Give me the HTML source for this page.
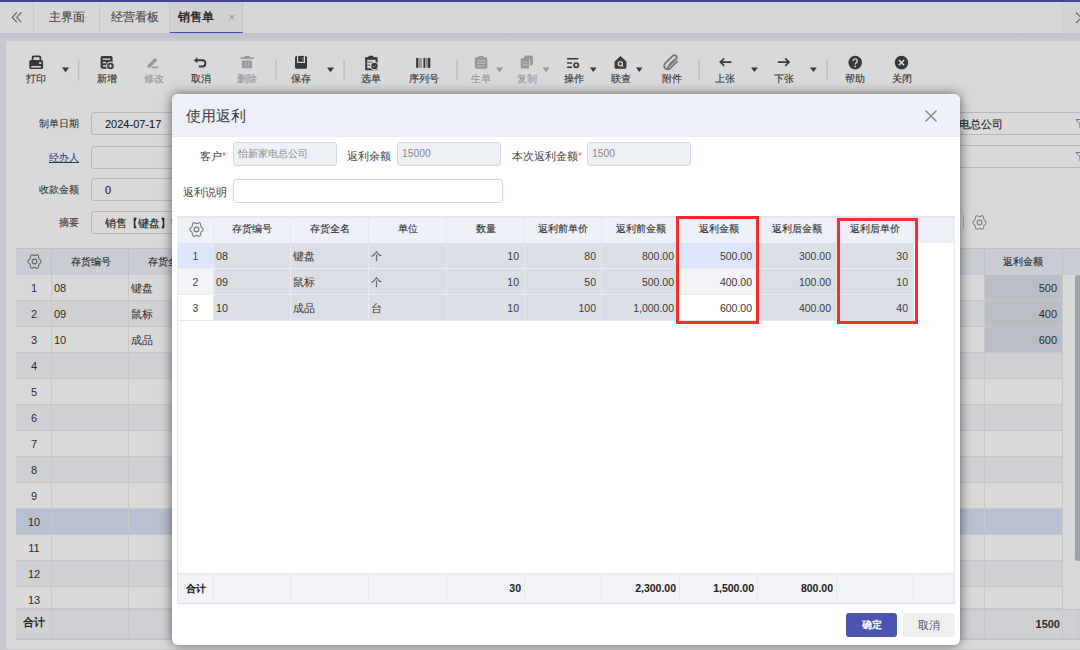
<!DOCTYPE html>
<html><head><meta charset="utf-8">
<style>
*{box-sizing:border-box;margin:0;padding:0}
html,body{width:1080px;height:650px;overflow:hidden}
body{position:relative;font-family:"Liberation Sans",sans-serif;font-size:11px;color:#333;background:#eaecf4}
.a{position:absolute}
.t{position:absolute;white-space:nowrap}
#topline{left:0;top:0;width:1080px;height:2px;background:#4a55b0}
#tabbar{left:0;top:2px;width:1080px;height:31px;background:#fdfdfd}
.tab{position:absolute;top:0;height:31px;border-right:1px solid #ececec;font-size:12.3px;color:#555;-webkit-text-stroke:0.15px #555;line-height:31px;text-align:center}
#panel{left:6px;top:41px;width:1074px;height:608px;background:#fff}
.lbl{position:absolute;top:73px;white-space:nowrap;line-height:12px;font-size:10px;-webkit-text-stroke:0.15px #444;color:#444;transform:translateX(-50%)}
.lbl.dis{-webkit-text-stroke:0.15px #b4b4b4}
.dis{color:#b4b4b4}
.flbl{position:absolute;white-space:nowrap;color:#444;-webkit-text-stroke:0.1px #444;font-size:10px;line-height:12px;text-align:right}
.inp{position:absolute;height:23px;border:1px solid #d3d9e8;border-radius:3px;background:#fff;font-size:11px;line-height:21px;padding-top:1px;padding-left:13px;color:#222;-webkit-text-stroke:0.1px #222;white-space:nowrap;overflow:hidden}
.bc{position:absolute;border-right:1px solid #e4e4e4;border-bottom:1px solid #e4e4e4;white-space:nowrap;overflow:hidden;font-size:11px;line-height:25px;color:#333}
#overlay{left:0;top:0;width:1080px;height:650px;background:rgba(0,0,0,0.15)}
#modal{left:172px;top:94px;width:788px;height:551px;background:#fff;border-radius:6px;overflow:hidden;box-shadow:0 0 12px rgba(0,0,0,0.58)}
#mhead{left:0;top:0;width:788px;height:43px;background:#edf0f7;border-bottom:1px solid #e9ebf0}
.mlbl{position:absolute;white-space:nowrap;color:#444;font-size:10.6px;line-height:12px}
.mi{position:absolute;height:24px;border:1px solid #cdd6ea;border-radius:3px;background:#fff;font-size:10.3px;line-height:21px;padding-left:4px;color:#8a8a8a;white-space:nowrap}
.mi.ro{background:#edf0f5}
.mc{position:absolute;border-right:1px solid #e6e8ee;border-bottom:1px solid #e6e8ee;white-space:nowrap;overflow:hidden;font-size:11px;line-height:25px;color:#333}
.mh{position:absolute;white-space:nowrap;overflow:hidden;font-size:10px;-webkit-text-stroke:0.12px #333;line-height:26px;color:#333;text-align:center}
.r{text-align:right;padding-right:4px}
.l{padding-left:3px}
.rbox{position:absolute;border:3px solid #fe2b2b}
</style></head>
<body>
<div id="page">
<div class="a" id="topline"></div>
<div class="a" id="tabbar">
 <div class="tab" style="left:0;width:34px"></div>
 <svg class="a" style="left:0;top:-2px" width="34" height="33"><path d="M16.9,12.3L12.3,17.4L16.9,22.4M21.4,12.3L16.8,17.4L21.4,22.4" fill="none" stroke="#838383" stroke-width="1.35"/></svg>
 <div class="tab" style="left:34px;width:66px">主界面</div>
 <div class="tab" style="left:100px;width:70px">经营看板</div>
 <div class="tab" style="left:170px;width:73px;background:#f6f6f6;color:#222;-webkit-text-stroke:0.35px #222;text-align:left;padding-left:8px">销售单<span style="position:absolute;left:58.5px;top:0;font-size:11px;color:#aaa;-webkit-text-stroke:0">×</span></div>
 <div class="a" style="left:170px;top:29.5px;width:73px;height:1.5px;background:#5262bf"></div>
 <div class="tab" style="left:1061px;width:19px;background:#f7f7f7;border:none"></div>
 <svg class="a" style="left:1075px;top:10px" width="12" height="12"><path d="M1,0.5L11.5,11M11.5,0.5L1,11" stroke="#7a7a7a" stroke-width="1.2"/></svg>
</div>
<div class="a" style="left:0;top:33px;width:1080px;height:8px;background:linear-gradient(#e0e3f1,#eaecf5)"></div>
<div class="a" id="panel"></div>
<svg class="a" style="left:0;top:0" width="1080" height="100" viewBox="0 0 1080 100">
   <g fill="#444">
    <!-- printer -->
    <path d="M32.6,60.2V57.4a1,1 0 0 1 1,-1H39.4a1,1 0 0 1 1,1V60.2" fill="none" stroke="#444" stroke-width="1.7"/>
    <rect x="29.3" y="60" width="13.8" height="9" rx="1.6"/>
    <rect x="31.2" y="66.1" width="9.8" height="1.5" fill="#fff"/>
    <rect x="39" y="62.3" width="2.4" height="1.6" fill="#fff"/>
    <path d="M62,67.5h7l-3.5,4.7z"/>
    <!-- xinzeng doc -->
    <rect x="100.6" y="56" width="12" height="12.8" rx="1.8"/>
    <rect x="102.8" y="58.5" width="7.4" height="1.4" fill="#fff"/>
    <rect x="102.8" y="61.9" width="3.4" height="1.4" fill="#fff"/>
    <rect x="102.8" y="65.3" width="3.4" height="1.4" fill="#fff"/>
    <circle cx="110.5" cy="66" r="4.4" fill="#fff"/>
    <circle cx="110.5" cy="66" r="3.3"/>
    <path d="M110.5,64.2v3.6M108.7,66h3.6" stroke="#fff" stroke-width="1"/>
    <!-- undo -->
    <path d="M193.8,60.3l3.6,-3v6z"/>
    <path d="M196.5,60.3H202.3a3.1,3.1 0 0 1 0,6.2H198.8" fill="none" stroke="#444" stroke-width="1.9"/>
    <!-- floppy -->
    <rect x="295" y="55.9" width="12" height="12.9" rx="1.6"/>
    <rect x="297" y="55.9" width="8" height="7.1" fill="#fff"/>
    <rect x="298.2" y="55.9" width="5.6" height="5.9"/>
    <rect x="302.3" y="57.3" width="1.3" height="3.4" fill="#999"/>
    <path d="M327,67.5h7l-3.5,4.7z"/>
    <!-- clipboard check -->
    <path d="M366.2,58.3h10.4v11h-10.4z" fill="none" stroke="#444" stroke-width="2"/>
    <rect x="365.2" y="57.4" width="11.4" height="2.4" rx="1"/>
    <rect x="368.5" y="55.8" width="4.8" height="2.2" rx="0.8"/>
    <rect x="367.6" y="61.5" width="5" height="1.4" fill="#888"/>
    <rect x="367.6" y="64.6" width="3" height="1.4" fill="#888"/>
    <circle cx="374.5" cy="66" r="4.2" fill="#fff"/>
    <circle cx="374.5" cy="66" r="3.2"/>
    <path d="M372.9,66l1.1,1.1l2,-2" fill="none" stroke="#aaa" stroke-width="0.9"/>
    <!-- barcode -->
    <rect x="416.1" y="57.9" width="1.9" height="9.9"/>
    <rect x="418" y="57.9" width="3.9" height="9.9" fill="#b0b0b0"/>
    <rect x="423.4" y="57.9" width="1.8" height="9.9"/>
    <rect x="425.2" y="57.9" width="2.8" height="9.9" fill="#b0b0b0"/>
    <rect x="428" y="57.9" width="2.3" height="9.9"/>
    <!-- caozuo lines -->
    <rect x="566.9" y="57.9" width="11.6" height="1.5" rx="0.7"/>
    <rect x="566.9" y="62.3" width="5.2" height="1.5" rx="0.7"/>
    <rect x="566.9" y="66.6" width="5.2" height="1.5" rx="0.7"/>
    <circle cx="576.2" cy="65.2" r="2.2" fill="none" stroke="#444" stroke-width="1.7"/>
    <path d="M590,67.5h6.5l-3.25,4.5z"/>
    <!-- lianche house -->
    <path d="M614.6,61.4L620.5,56.1L626.4,61.4V67.6a1.1,1.1 0 0 1 -1.1,1.1H615.7a1.1,1.1 0 0 1 -1.1,-1.1z"/>
    <circle cx="620.3" cy="63.8" r="2.1" fill="none" stroke="#fff" stroke-width="1.3"/>
    <path d="M621.5,65l1.6,1.6" stroke="#fff" stroke-width="1.3"/>
    <path d="M636,67.5h6.5l-3.25,4.5z"/>
    <!-- arrows -->
    <path d="M719.8,62.1H731.4M724.2,58.4L720.4,62.1L724.2,65.8" fill="none" stroke="#444" stroke-width="1.7"/>
    <path d="M751,67.5h6.8l-3.4,4.6z"/>
    <path d="M778,62.1H789.6M785.2,58.4L789,62.1L785.2,65.8" fill="none" stroke="#444" stroke-width="1.7"/>
    <path d="M810,67.5h6.8l-3.4,4.6z"/>
    <!-- help -->
    <circle cx="855.2" cy="62.6" r="6.8"/>
    <path d="M853.1,61a2.1,2.1 0 1 1 3,1.9c-0.7,0.4 -0.9,0.8 -0.9,1.6" fill="none" stroke="#fff" stroke-width="1.4"/>
    <circle cx="855.2" cy="66.4" r="0.85" fill="#fff"/>
    <!-- close -->
    <circle cx="901.5" cy="62.6" r="6.8"/>
    <path d="M898.9,60l5.2,5.2M904.1,60l-5.2,5.2" stroke="#fff" stroke-width="1.6"/>
   </g>
   <g fill="#b3b3b3">
    <!-- pencil -->
    <path d="M147.2,68.1L147.9,64.9L155,57.8L157.4,60.2L150.3,67.3Z"/>
    <rect x="151.4" y="66.6" width="7" height="1.6" rx="0.6"/>
    <!-- trash -->
    <rect x="240.6" y="57.2" width="13.3" height="1.7"/>
    <rect x="244.8" y="56" width="5" height="1.6"/>
    <rect x="242" y="60.4" width="10" height="7.9" rx="0.8"/>
    <rect x="245.2" y="61.8" width="1" height="5" fill="#ddd"/>
    <rect x="247.8" y="61.8" width="1" height="5" fill="#ddd"/>
    <!-- shengdan clipboard -->
    <rect x="474.9" y="57.2" width="12.4" height="11.5" rx="1.5"/>
    <rect x="478.5" y="56" width="5.2" height="2.2" rx="0.8"/>
    <rect x="477" y="60.2" width="8.2" height="1.2" fill="#ddd"/>
    <rect x="477" y="62.8" width="8.2" height="1.2" fill="#ddd"/>
    <rect x="477" y="65.4" width="8.2" height="1.2" fill="#ddd"/>
    <path d="M496,67.5h7l-3.5,4.7z"/>
    <!-- copy -->
    <rect x="524.2" y="55.6" width="8.6" height="9.8" rx="1.5"/>
    <rect x="521.8" y="58.5" width="8.4" height="10.6" rx="1.5" fill="#fff"/>
    <rect x="520.7" y="58" width="8.6" height="10.6" rx="1.5"/>
    <rect x="522.6" y="61.6" width="5" height="1.2" fill="#ddd"/>
    <rect x="522.6" y="64.2" width="5" height="1.2" fill="#ddd"/>
    <path d="M542.6,67.5h7l-3.5,4.7z"/>
   </g>
   <!-- paperclip -->
   <path d="M667.6,67.6L676,59.2a2.3,2.3 0 0 0 -3.3,-3.3L665.2,63.4a3.5,3.5 0 0 0 5,5L677.2,61.4" fill="none" stroke="#8a8a8a" stroke-width="1.7" stroke-linecap="round"/>
   <path d="M669.2,64.8L674.2,59.8" fill="none" stroke="#8a8a8a" stroke-width="1.4" stroke-linecap="round"/>
   <!-- separators -->
   <g fill="#d3d3d3">
    <rect x="78.3" y="59.3" width="1" height="21.5"/>
    <rect x="275.6" y="59.3" width="1" height="21.5"/>
    <rect x="343.6" y="59.3" width="1" height="21.5"/>
    <rect x="456.6" y="59.3" width="1" height="21.5"/>
    <rect x="698.6" y="59.3" width="1" height="21.5"/>
    <rect x="826.6" y="59.3" width="1" height="21.5"/>
   </g>
  </svg>
  <div class="lbl" style="left:36px">打印</div>
  <div class="lbl" style="left:107.3px">新增</div>
  <div class="lbl dis" style="left:153.5px">修改</div>
  <div class="lbl" style="left:200.7px">取消</div>
  <div class="lbl dis" style="left:247.3px">删除</div>
  <div class="lbl" style="left:300.5px">保存</div>
  <div class="lbl" style="left:371.4px">选单</div>
  <div class="lbl" style="left:423.5px">序列号</div>
  <div class="lbl dis" style="left:480.5px">生单</div>
  <div class="lbl dis" style="left:526.9px">复制</div>
  <div class="lbl" style="left:574.3px">操作</div>
  <div class="lbl" style="left:620.5px">联查</div>
  <div class="lbl" style="left:671.8px">附件</div>
  <div class="lbl" style="left:725.4px">上张</div>
  <div class="lbl" style="left:784.3px">下张</div>
  <div class="lbl" style="left:855px">帮助</div>
  <div class="lbl" style="left:901.5px">关闭</div>
<div class="flbl" style="left:0;width:79px;top:118px">制单日期</div>
<div class="inp" style="left:91px;top:112px;width:200px">2024-07-17</div>
<div class="flbl" style="left:0;width:79px;top:151.5px;color:#3d4fb8;text-decoration:underline">经办人</div>
<div class="inp" style="left:91px;top:145.5px;width:200px"></div>
<div class="flbl" style="left:0;width:79px;top:184px">收款金额</div>
<div class="inp" style="left:91px;top:178px;width:200px">0</div>
<div class="flbl" style="left:0;width:79px;top:217px">摘要</div>
<div class="inp" style="left:91px;top:211px;width:200px">销售【键盘】等</div>
<div class="inp" style="left:880px;top:112px;width:220px;padding-left:45px;color:#222">怡新家电总公司</div>
<div class="inp" style="left:880px;top:145px;width:220px"></div>
<svg class="a" style="left:1075px;top:118px" width="10" height="12"><path d="M1,1.5H11L7,6V11L5,10V6z" fill="none" stroke="#7a8aa8" stroke-width="1"/></svg>
<svg class="a" style="left:1075px;top:151px" width="10" height="12"><path d="M1,1.5H11L7,6V11L5,10V6z" fill="none" stroke="#7a8aa8" stroke-width="1"/></svg>
<div class="a" style="left:963px;top:215px;width:1px;height:14px;background:#ccc"></div>
<svg class="a" style="left:971.5px;top:214.5px" width="15" height="15" viewBox="0 0 16 16" style="overflow:visible"><path d="M14.95,8.00 L14.88,8.52 L14.67,9.01 L14.36,9.46 L13.99,9.85 L13.60,10.19 L13.24,10.50 L12.94,10.80 L12.72,11.13 L12.58,11.52 L12.50,11.97 L12.45,12.48 L12.38,13.04 L12.28,13.61 L12.10,14.14 L11.83,14.59 L11.48,14.92 L11.05,15.11 L10.58,15.15 L10.09,15.06 L9.60,14.89 L9.15,14.67 L8.74,14.46 L8.36,14.32 L8.00,14.27 L7.64,14.32 L7.26,14.46 L6.85,14.67 L6.40,14.89 L5.91,15.06 L5.42,15.15 L4.95,15.11 L4.53,14.92 L4.17,14.59 L3.90,14.14 L3.72,13.61 L3.62,13.04 L3.55,12.48 L3.50,11.97 L3.42,11.52 L3.28,11.13 L3.06,10.80 L2.76,10.50 L2.40,10.19 L2.01,9.85 L1.64,9.46 L1.33,9.01 L1.12,8.52 L1.05,8.00 L1.12,7.48 L1.33,6.99 L1.64,6.54 L2.01,6.15 L2.40,5.81 L2.76,5.50 L3.06,5.20 L3.28,4.87 L3.42,4.48 L3.50,4.03 L3.55,3.52 L3.62,2.96 L3.72,2.39 L3.90,1.86 L4.17,1.41 L4.52,1.08 L4.95,0.89 L5.42,0.85 L5.91,0.94 L6.40,1.11 L6.85,1.33 L7.26,1.54 L7.64,1.68 L8.00,1.73 L8.36,1.68 L8.74,1.54 L9.15,1.33 L9.60,1.11 L10.09,0.94 L10.58,0.85 L11.05,0.89 L11.48,1.08 L11.83,1.41 L12.10,1.86 L12.28,2.39 L12.38,2.96 L12.45,3.52 L12.50,4.03 L12.58,4.48 L12.72,4.87 L12.94,5.20 L13.24,5.50 L13.60,5.81 L13.99,6.15 L14.36,6.54 L14.67,6.99 L14.88,7.48Z" fill="none" stroke="#999" stroke-width="1.15" stroke-linejoin="round"/><circle cx="8" cy="8" r="2.5" fill="none" stroke="#999" stroke-width="1.15"/></svg>
<div class="a" style="left:16px;top:248px;width:1064px;height:27px;background:#edf0f7;border-top:1px solid #dfe3ec"></div>
<div class="a" style="left:51px;top:248px;width:1px;height:27px;background:#dde2ec"></div>
<div class="a" style="left:128px;top:248px;width:1px;height:27px;background:#dde2ec"></div>
<div class="a" style="left:984px;top:248px;width:1px;height:27px;background:#dde2ec"></div>
<div class="a" style="left:1062px;top:248px;width:1px;height:27px;background:#dde2ec"></div>
<svg class="a" style="left:27px;top:253.5px" width="15" height="15" viewBox="0 0 16 16" style="overflow:visible"><path d="M14.95,8.00 L14.88,8.52 L14.67,9.01 L14.36,9.46 L13.99,9.85 L13.60,10.19 L13.24,10.50 L12.94,10.80 L12.72,11.13 L12.58,11.52 L12.50,11.97 L12.45,12.48 L12.38,13.04 L12.28,13.61 L12.10,14.14 L11.83,14.59 L11.48,14.92 L11.05,15.11 L10.58,15.15 L10.09,15.06 L9.60,14.89 L9.15,14.67 L8.74,14.46 L8.36,14.32 L8.00,14.27 L7.64,14.32 L7.26,14.46 L6.85,14.67 L6.40,14.89 L5.91,15.06 L5.42,15.15 L4.95,15.11 L4.53,14.92 L4.17,14.59 L3.90,14.14 L3.72,13.61 L3.62,13.04 L3.55,12.48 L3.50,11.97 L3.42,11.52 L3.28,11.13 L3.06,10.80 L2.76,10.50 L2.40,10.19 L2.01,9.85 L1.64,9.46 L1.33,9.01 L1.12,8.52 L1.05,8.00 L1.12,7.48 L1.33,6.99 L1.64,6.54 L2.01,6.15 L2.40,5.81 L2.76,5.50 L3.06,5.20 L3.28,4.87 L3.42,4.48 L3.50,4.03 L3.55,3.52 L3.62,2.96 L3.72,2.39 L3.90,1.86 L4.17,1.41 L4.52,1.08 L4.95,0.89 L5.42,0.85 L5.91,0.94 L6.40,1.11 L6.85,1.33 L7.26,1.54 L7.64,1.68 L8.00,1.73 L8.36,1.68 L8.74,1.54 L9.15,1.33 L9.60,1.11 L10.09,0.94 L10.58,0.85 L11.05,0.89 L11.48,1.08 L11.83,1.41 L12.10,1.86 L12.28,2.39 L12.38,2.96 L12.45,3.52 L12.50,4.03 L12.58,4.48 L12.72,4.87 L12.94,5.20 L13.24,5.50 L13.60,5.81 L13.99,6.15 L14.36,6.54 L14.67,6.99 L14.88,7.48Z" fill="none" stroke="#777" stroke-width="1.15" stroke-linejoin="round"/><circle cx="8" cy="8" r="2.5" fill="none" stroke="#777" stroke-width="1.15"/></svg>
<div class="t" style="left:52px;top:256px;width:77px;text-align:center;font-size:10px;-webkit-text-stroke:0.12px #333;line-height:12px;color:#333">存货编号</div>
<div class="t" style="left:129px;top:256px;width:78px;text-align:center;font-size:10px;-webkit-text-stroke:0.12px #333;line-height:12px;color:#333">存货全名</div>
<div class="t" style="left:906px;top:256px;width:78px;text-align:center;font-size:10px;-webkit-text-stroke:0.12px #333;line-height:12px;color:#333">折扣额</div>
<div class="t" style="left:984px;top:256px;width:78px;text-align:center;font-size:10px;-webkit-text-stroke:0.12px #333;line-height:12px;color:#333">返利金额</div>
<div class="a" style="left:16px;top:274.5px;width:1047px;height:26px;background:#fff;border-bottom:1px solid #eaeaea"></div>
<div class="a" style="left:51px;top:274.5px;width:1px;height:26px;background:#eaeaea"></div>
<div class="a" style="left:128px;top:274.5px;width:1px;height:26px;background:#eaeaea"></div>
<div class="a" style="left:984px;top:274.5px;width:1px;height:26px;background:#eaeaea"></div>
<div class="a" style="left:1062px;top:274.5px;width:1px;height:26px;background:#eaeaea"></div>
<div class="t" style="left:16px;top:274.5px;width:36px;text-align:center;line-height:26px;font-size:11px;color:#333">1</div>
<div class="a" style="left:985px;top:274.5px;width:77px;height:25px;background:#dcdee7"></div>
<div class="t" style="left:54px;top:274.5px;line-height:26px">08</div>
<div class="t" style="left:131px;top:274.5px;line-height:26px">键盘</div>
<div class="t" style="left:984px;top:274.5px;width:73px;text-align:right;line-height:26px">500</div>
<div class="a" style="left:16px;top:300.5px;width:1047px;height:26px;background:#f4f5f9;border-bottom:1px solid #eaeaea"></div>
<div class="a" style="left:51px;top:300.5px;width:1px;height:26px;background:#eaeaea"></div>
<div class="a" style="left:128px;top:300.5px;width:1px;height:26px;background:#eaeaea"></div>
<div class="a" style="left:984px;top:300.5px;width:1px;height:26px;background:#eaeaea"></div>
<div class="a" style="left:1062px;top:300.5px;width:1px;height:26px;background:#eaeaea"></div>
<div class="t" style="left:16px;top:300.5px;width:36px;text-align:center;line-height:26px;font-size:11px;color:#333">2</div>
<div class="a" style="left:985px;top:300.5px;width:77px;height:25px;background:#dcdee7"></div>
<div class="t" style="left:54px;top:300.5px;line-height:26px">09</div>
<div class="t" style="left:131px;top:300.5px;line-height:26px">鼠标</div>
<div class="t" style="left:984px;top:300.5px;width:73px;text-align:right;line-height:26px">400</div>
<div class="a" style="left:16px;top:326.5px;width:1047px;height:26px;background:#fff;border-bottom:1px solid #eaeaea"></div>
<div class="a" style="left:51px;top:326.5px;width:1px;height:26px;background:#eaeaea"></div>
<div class="a" style="left:128px;top:326.5px;width:1px;height:26px;background:#eaeaea"></div>
<div class="a" style="left:984px;top:326.5px;width:1px;height:26px;background:#eaeaea"></div>
<div class="a" style="left:1062px;top:326.5px;width:1px;height:26px;background:#eaeaea"></div>
<div class="t" style="left:16px;top:326.5px;width:36px;text-align:center;line-height:26px;font-size:11px;color:#333">3</div>
<div class="a" style="left:985px;top:326.5px;width:77px;height:25px;background:#dcdee7"></div>
<div class="t" style="left:54px;top:326.5px;line-height:26px">10</div>
<div class="t" style="left:131px;top:326.5px;line-height:26px">成品</div>
<div class="t" style="left:984px;top:326.5px;width:73px;text-align:right;line-height:26px">600</div>
<div class="a" style="left:16px;top:352.5px;width:1047px;height:26px;background:#f4f5f9;border-bottom:1px solid #eaeaea"></div>
<div class="a" style="left:51px;top:352.5px;width:1px;height:26px;background:#eaeaea"></div>
<div class="a" style="left:128px;top:352.5px;width:1px;height:26px;background:#eaeaea"></div>
<div class="a" style="left:984px;top:352.5px;width:1px;height:26px;background:#eaeaea"></div>
<div class="a" style="left:1062px;top:352.5px;width:1px;height:26px;background:#eaeaea"></div>
<div class="t" style="left:16px;top:352.5px;width:36px;text-align:center;line-height:26px;font-size:11px;color:#333">4</div>
<div class="a" style="left:16px;top:378.5px;width:1047px;height:26px;background:#fff;border-bottom:1px solid #eaeaea"></div>
<div class="a" style="left:51px;top:378.5px;width:1px;height:26px;background:#eaeaea"></div>
<div class="a" style="left:128px;top:378.5px;width:1px;height:26px;background:#eaeaea"></div>
<div class="a" style="left:984px;top:378.5px;width:1px;height:26px;background:#eaeaea"></div>
<div class="a" style="left:1062px;top:378.5px;width:1px;height:26px;background:#eaeaea"></div>
<div class="t" style="left:16px;top:378.5px;width:36px;text-align:center;line-height:26px;font-size:11px;color:#333">5</div>
<div class="a" style="left:16px;top:404.5px;width:1047px;height:26px;background:#f4f5f9;border-bottom:1px solid #eaeaea"></div>
<div class="a" style="left:51px;top:404.5px;width:1px;height:26px;background:#eaeaea"></div>
<div class="a" style="left:128px;top:404.5px;width:1px;height:26px;background:#eaeaea"></div>
<div class="a" style="left:984px;top:404.5px;width:1px;height:26px;background:#eaeaea"></div>
<div class="a" style="left:1062px;top:404.5px;width:1px;height:26px;background:#eaeaea"></div>
<div class="t" style="left:16px;top:404.5px;width:36px;text-align:center;line-height:26px;font-size:11px;color:#333">6</div>
<div class="a" style="left:16px;top:430.5px;width:1047px;height:26px;background:#fff;border-bottom:1px solid #eaeaea"></div>
<div class="a" style="left:51px;top:430.5px;width:1px;height:26px;background:#eaeaea"></div>
<div class="a" style="left:128px;top:430.5px;width:1px;height:26px;background:#eaeaea"></div>
<div class="a" style="left:984px;top:430.5px;width:1px;height:26px;background:#eaeaea"></div>
<div class="a" style="left:1062px;top:430.5px;width:1px;height:26px;background:#eaeaea"></div>
<div class="t" style="left:16px;top:430.5px;width:36px;text-align:center;line-height:26px;font-size:11px;color:#333">7</div>
<div class="a" style="left:16px;top:456.5px;width:1047px;height:26px;background:#f4f5f9;border-bottom:1px solid #eaeaea"></div>
<div class="a" style="left:51px;top:456.5px;width:1px;height:26px;background:#eaeaea"></div>
<div class="a" style="left:128px;top:456.5px;width:1px;height:26px;background:#eaeaea"></div>
<div class="a" style="left:984px;top:456.5px;width:1px;height:26px;background:#eaeaea"></div>
<div class="a" style="left:1062px;top:456.5px;width:1px;height:26px;background:#eaeaea"></div>
<div class="t" style="left:16px;top:456.5px;width:36px;text-align:center;line-height:26px;font-size:11px;color:#333">8</div>
<div class="a" style="left:16px;top:482.5px;width:1047px;height:26px;background:#fff;border-bottom:1px solid #eaeaea"></div>
<div class="a" style="left:51px;top:482.5px;width:1px;height:26px;background:#eaeaea"></div>
<div class="a" style="left:128px;top:482.5px;width:1px;height:26px;background:#eaeaea"></div>
<div class="a" style="left:984px;top:482.5px;width:1px;height:26px;background:#eaeaea"></div>
<div class="a" style="left:1062px;top:482.5px;width:1px;height:26px;background:#eaeaea"></div>
<div class="t" style="left:16px;top:482.5px;width:36px;text-align:center;line-height:26px;font-size:11px;color:#333">9</div>
<div class="a" style="left:16px;top:508.5px;width:1047px;height:26px;background:#d9e1f7;border-bottom:1px solid #eaeaea"></div>
<div class="a" style="left:51px;top:508.5px;width:1px;height:26px;background:#eaeaea"></div>
<div class="a" style="left:128px;top:508.5px;width:1px;height:26px;background:#eaeaea"></div>
<div class="a" style="left:984px;top:508.5px;width:1px;height:26px;background:#eaeaea"></div>
<div class="a" style="left:1062px;top:508.5px;width:1px;height:26px;background:#eaeaea"></div>
<div class="t" style="left:16px;top:508.5px;width:36px;text-align:center;line-height:26px;font-size:11px;color:#333">10</div>
<div class="a" style="left:16px;top:534.5px;width:1047px;height:26px;background:#fff;border-bottom:1px solid #eaeaea"></div>
<div class="a" style="left:51px;top:534.5px;width:1px;height:26px;background:#eaeaea"></div>
<div class="a" style="left:128px;top:534.5px;width:1px;height:26px;background:#eaeaea"></div>
<div class="a" style="left:984px;top:534.5px;width:1px;height:26px;background:#eaeaea"></div>
<div class="a" style="left:1062px;top:534.5px;width:1px;height:26px;background:#eaeaea"></div>
<div class="t" style="left:16px;top:534.5px;width:36px;text-align:center;line-height:26px;font-size:11px;color:#333">11</div>
<div class="a" style="left:16px;top:560.5px;width:1047px;height:26px;background:#f4f5f9;border-bottom:1px solid #eaeaea"></div>
<div class="a" style="left:51px;top:560.5px;width:1px;height:26px;background:#eaeaea"></div>
<div class="a" style="left:128px;top:560.5px;width:1px;height:26px;background:#eaeaea"></div>
<div class="a" style="left:984px;top:560.5px;width:1px;height:26px;background:#eaeaea"></div>
<div class="a" style="left:1062px;top:560.5px;width:1px;height:26px;background:#eaeaea"></div>
<div class="t" style="left:16px;top:560.5px;width:36px;text-align:center;line-height:26px;font-size:11px;color:#333">12</div>
<div class="a" style="left:16px;top:586.5px;width:1047px;height:22.0px;background:#fff;border-bottom:1px solid #eaeaea"></div>
<div class="a" style="left:51px;top:586.5px;width:1px;height:22.0px;background:#eaeaea"></div>
<div class="a" style="left:128px;top:586.5px;width:1px;height:22.0px;background:#eaeaea"></div>
<div class="a" style="left:984px;top:586.5px;width:1px;height:22.0px;background:#eaeaea"></div>
<div class="a" style="left:1062px;top:586.5px;width:1px;height:22.0px;background:#eaeaea"></div>
<div class="t" style="left:16px;top:586.5px;width:36px;text-align:center;line-height:26px;font-size:11px;color:#333">13</div>
<div class="a" style="left:16px;top:608.5px;width:1064px;height:31px;background:#f4f5f9;border-top:1px solid #e4e4e4;border-bottom:2px solid #e3e7f0"></div>
<div class="a" style="left:51px;top:608.5px;width:1px;height:30px;background:#eaeaea"></div>
<div class="a" style="left:128px;top:608.5px;width:1px;height:30px;background:#eaeaea"></div>
<div class="a" style="left:984px;top:608.5px;width:1px;height:30px;background:#eaeaea"></div>
<div class="a" style="left:1062px;top:608.5px;width:1px;height:30px;background:#eaeaea"></div>
<div class="t" style="left:16px;top:607px;width:36px;text-align:center;line-height:30px;font-weight:bold">合计</div>
<div class="t" style="left:984px;top:608.5px;width:76px;text-align:right;line-height:30px;font-weight:bold">1500</div>
<div class="a" style="left:1078px;top:608.5px;width:1px;height:30px;background:#eaeaea"></div>
<div class="a" style="left:1075px;top:275px;width:6px;height:285.5px;background:#bcc0cb;border-radius:3px"></div>
</div>
<div class="a" id="overlay"></div>
<div class="a" id="modal">
<div class="a" id="mhead"></div>
<div class="t" style="left:14px;top:13px;font-size:14.5px;line-height:18px;color:#3c3c3c">使用返利</div>
<svg class="a" style="left:752px;top:15px" width="14" height="14"><path d="M1.5,1.5L12.5,12.5M12.5,1.5L1.5,12.5" stroke="#8a8a8a" stroke-width="1.5"/></svg>
<div class="mlbl" style="left:28px;top:56px">客户<span style="color:#f0605a">*</span></div>
<div class="mi ro" style="left:61px;top:48px;width:104px">怡新家电总公司</div>
<div class="mlbl" style="left:175px;top:56px">返利余额</div>
<div class="mi ro" style="left:225px;top:48px;width:104px">15000</div>
<div class="mlbl" style="left:340px;top:56px">本次返利金额<span style="color:#f0605a">*</span></div>
<div class="mi ro" style="left:415px;top:48px;width:104px">1500</div>
<div class="mlbl" style="left:11px;top:92px">返利说明</div>
<div class="mi" style="left:61px;top:85px;width:270px"></div>
<div class="a" style="left:5px;top:122px;width:778px;height:27px;background:#edf0f7;"></div>
<div class="a" style="left:5px;top:122px;width:778px;height:2px;background:#e2e6ef;"></div>
<div class="a" style="left:41px;top:122px;width:1px;height:27px;background:#e3e7f0;"></div>
<div class="a" style="left:118px;top:122px;width:1px;height:27px;background:#e3e7f0;"></div>
<div class="a" style="left:196px;top:122px;width:1px;height:27px;background:#e3e7f0;"></div>
<div class="a" style="left:274px;top:122px;width:1px;height:27px;background:#e3e7f0;"></div>
<div class="a" style="left:352px;top:122px;width:1px;height:27px;background:#e3e7f0;"></div>
<div class="a" style="left:429px;top:122px;width:1px;height:27px;background:#e3e7f0;"></div>
<div class="a" style="left:507px;top:122px;width:1px;height:27px;background:#e3e7f0;"></div>
<div class="a" style="left:585px;top:122px;width:1px;height:27px;background:#e3e7f0;"></div>
<div class="a" style="left:664px;top:122px;width:1px;height:27px;background:#e3e7f0;"></div>
<div class="a" style="left:741px;top:122px;width:1px;height:27px;background:#e3e7f0;"></div>
<div class="mh" style="left:42px;top:122px;width:76px;height:27px">存货编号</div>
<div class="mh" style="left:119px;top:122px;width:77px;height:27px">存货全名</div>
<div class="mh" style="left:197px;top:122px;width:77px;height:27px">单位</div>
<div class="mh" style="left:275px;top:122px;width:77px;height:27px">数量</div>
<div class="mh" style="left:353px;top:122px;width:76px;height:27px">返利前单价</div>
<div class="mh" style="left:430px;top:122px;width:77px;height:27px">返利前金额</div>
<div class="mh" style="left:508px;top:122px;width:77px;height:27px">返利金额</div>
<div class="mh" style="left:586px;top:122px;width:78px;height:27px">返利后金额</div>
<div class="mh" style="left:665px;top:122px;width:76px;height:27px">返利后单价</div>
<svg class="a" style="left:16.5px;top:127.5px" width="15" height="15" viewBox="0 0 16 16" style="overflow:visible"><path d="M14.95,8.00 L14.88,8.52 L14.67,9.01 L14.36,9.46 L13.99,9.85 L13.60,10.19 L13.24,10.50 L12.94,10.80 L12.72,11.13 L12.58,11.52 L12.50,11.97 L12.45,12.48 L12.38,13.04 L12.28,13.61 L12.10,14.14 L11.83,14.59 L11.48,14.92 L11.05,15.11 L10.58,15.15 L10.09,15.06 L9.60,14.89 L9.15,14.67 L8.74,14.46 L8.36,14.32 L8.00,14.27 L7.64,14.32 L7.26,14.46 L6.85,14.67 L6.40,14.89 L5.91,15.06 L5.42,15.15 L4.95,15.11 L4.53,14.92 L4.17,14.59 L3.90,14.14 L3.72,13.61 L3.62,13.04 L3.55,12.48 L3.50,11.97 L3.42,11.52 L3.28,11.13 L3.06,10.80 L2.76,10.50 L2.40,10.19 L2.01,9.85 L1.64,9.46 L1.33,9.01 L1.12,8.52 L1.05,8.00 L1.12,7.48 L1.33,6.99 L1.64,6.54 L2.01,6.15 L2.40,5.81 L2.76,5.50 L3.06,5.20 L3.28,4.87 L3.42,4.48 L3.50,4.03 L3.55,3.52 L3.62,2.96 L3.72,2.39 L3.90,1.86 L4.17,1.41 L4.52,1.08 L4.95,0.89 L5.42,0.85 L5.91,0.94 L6.40,1.11 L6.85,1.33 L7.26,1.54 L7.64,1.68 L8.00,1.73 L8.36,1.68 L8.74,1.54 L9.15,1.33 L9.60,1.11 L10.09,0.94 L10.58,0.85 L11.05,0.89 L11.48,1.08 L11.83,1.41 L12.10,1.86 L12.28,2.39 L12.38,2.96 L12.45,3.52 L12.50,4.03 L12.58,4.48 L12.72,4.87 L12.94,5.20 L13.24,5.50 L13.60,5.81 L13.99,6.15 L14.36,6.54 L14.67,6.99 L14.88,7.48Z" fill="none" stroke="#777" stroke-width="1.15" stroke-linejoin="round"/><circle cx="8" cy="8" r="2.5" fill="none" stroke="#777" stroke-width="1.15"/></svg>
<div class="a" style="left:5px;top:149px;width:1px;height:330px;background:#e6eaf2;"></div>
<div class="a" style="left:782px;top:149px;width:1px;height:330px;background:#e6eaf2;"></div>
<div class="a" style="left:6px;top:149px;width:35px;height:25px;background:#dce5fa;"></div>
<div class="t" style="left:6px;top:150px;width:35px;text-align:center;line-height:25px;color:#444;font-size:10.5px">1</div>
<div class="a" style="left:42px;top:149px;width:76px;height:25px;background:#dcdee5;"></div>
<div class="t" style="left:44px;top:150px;line-height:25px;color:#333;font-size:10.7px">08</div>
<div class="a" style="left:119px;top:149px;width:77px;height:25px;background:#dcdee5;"></div>
<div class="t" style="left:121px;top:150px;line-height:25px;color:#333;font-size:10.7px">键盘</div>
<div class="a" style="left:197px;top:149px;width:77px;height:25px;background:#dcdee5;"></div>
<div class="t" style="left:199px;top:150px;line-height:25px;color:#333;font-size:10.7px">个</div>
<div class="a" style="left:275px;top:149px;width:77px;height:25px;background:#dcdee5;"></div>
<div class="t" style="left:275px;top:150px;width:72px;text-align:right;line-height:25px;color:#3a3a3a;font-size:10.5px">10</div>
<div class="a" style="left:353px;top:149px;width:76px;height:25px;background:#dcdee5;"></div>
<div class="t" style="left:353px;top:150px;width:71px;text-align:right;line-height:25px;color:#3a3a3a;font-size:10.5px">80</div>
<div class="a" style="left:430px;top:149px;width:77px;height:25px;background:#dcdee5;"></div>
<div class="t" style="left:430px;top:150px;width:72px;text-align:right;line-height:25px;color:#3a3a3a;font-size:10.5px">800.00</div>
<div class="a" style="left:508px;top:149px;width:77px;height:25px;background:#dce5fa;"></div>
<div class="t" style="left:508px;top:150px;width:72px;text-align:right;line-height:25px;color:#3a3a3a;font-size:10.5px">500.00</div>
<div class="a" style="left:586px;top:149px;width:78px;height:25px;background:#dcdee5;"></div>
<div class="t" style="left:586px;top:150px;width:73px;text-align:right;line-height:25px;color:#3a3a3a;font-size:10.5px">300.00</div>
<div class="a" style="left:665px;top:149px;width:76px;height:25px;background:#dcdee5;"></div>
<div class="t" style="left:665px;top:150px;width:71px;text-align:right;line-height:25px;color:#3a3a3a;font-size:10.5px">30</div>
<div class="a" style="left:6px;top:174px;width:736px;height:1px;background:#e8eaef;"></div>
<div class="a" style="left:41px;top:149px;width:1px;height:26px;background:#e8eaef;"></div>
<div class="a" style="left:118px;top:149px;width:1px;height:26px;background:#e8eaef;"></div>
<div class="a" style="left:196px;top:149px;width:1px;height:26px;background:#e8eaef;"></div>
<div class="a" style="left:274px;top:149px;width:1px;height:26px;background:#e8eaef;"></div>
<div class="a" style="left:352px;top:149px;width:1px;height:26px;background:#e8eaef;"></div>
<div class="a" style="left:429px;top:149px;width:1px;height:26px;background:#e8eaef;"></div>
<div class="a" style="left:507px;top:149px;width:1px;height:26px;background:#e8eaef;"></div>
<div class="a" style="left:585px;top:149px;width:1px;height:26px;background:#e8eaef;"></div>
<div class="a" style="left:664px;top:149px;width:1px;height:26px;background:#e8eaef;"></div>
<div class="a" style="left:741px;top:149px;width:1px;height:26px;background:#e8eaef;"></div>
<div class="a" style="left:6px;top:175px;width:35px;height:25px;background:#f1f3f7;"></div>
<div class="t" style="left:6px;top:176px;width:35px;text-align:center;line-height:25px;color:#444;font-size:10.5px">2</div>
<div class="a" style="left:42px;top:175px;width:76px;height:25px;background:#dcdee5;"></div>
<div class="t" style="left:44px;top:176px;line-height:25px;color:#333;font-size:10.7px">09</div>
<div class="a" style="left:119px;top:175px;width:77px;height:25px;background:#dcdee5;"></div>
<div class="t" style="left:121px;top:176px;line-height:25px;color:#333;font-size:10.7px">鼠标</div>
<div class="a" style="left:197px;top:175px;width:77px;height:25px;background:#dcdee5;"></div>
<div class="t" style="left:199px;top:176px;line-height:25px;color:#333;font-size:10.7px">个</div>
<div class="a" style="left:275px;top:175px;width:77px;height:25px;background:#dcdee5;"></div>
<div class="t" style="left:275px;top:176px;width:72px;text-align:right;line-height:25px;color:#3a3a3a;font-size:10.5px">10</div>
<div class="a" style="left:353px;top:175px;width:76px;height:25px;background:#dcdee5;"></div>
<div class="t" style="left:353px;top:176px;width:71px;text-align:right;line-height:25px;color:#3a3a3a;font-size:10.5px">50</div>
<div class="a" style="left:430px;top:175px;width:77px;height:25px;background:#dcdee5;"></div>
<div class="t" style="left:430px;top:176px;width:72px;text-align:right;line-height:25px;color:#3a3a3a;font-size:10.5px">500.00</div>
<div class="a" style="left:508px;top:175px;width:77px;height:25px;background:#f1f3f7;"></div>
<div class="t" style="left:508px;top:176px;width:72px;text-align:right;line-height:25px;color:#3a3a3a;font-size:10.5px">400.00</div>
<div class="a" style="left:586px;top:175px;width:78px;height:25px;background:#dcdee5;"></div>
<div class="t" style="left:586px;top:176px;width:73px;text-align:right;line-height:25px;color:#3a3a3a;font-size:10.5px">100.00</div>
<div class="a" style="left:665px;top:175px;width:76px;height:25px;background:#dcdee5;"></div>
<div class="t" style="left:665px;top:176px;width:71px;text-align:right;line-height:25px;color:#3a3a3a;font-size:10.5px">10</div>
<div class="a" style="left:6px;top:200px;width:736px;height:1px;background:#e8eaef;"></div>
<div class="a" style="left:41px;top:175px;width:1px;height:26px;background:#e8eaef;"></div>
<div class="a" style="left:118px;top:175px;width:1px;height:26px;background:#e8eaef;"></div>
<div class="a" style="left:196px;top:175px;width:1px;height:26px;background:#e8eaef;"></div>
<div class="a" style="left:274px;top:175px;width:1px;height:26px;background:#e8eaef;"></div>
<div class="a" style="left:352px;top:175px;width:1px;height:26px;background:#e8eaef;"></div>
<div class="a" style="left:429px;top:175px;width:1px;height:26px;background:#e8eaef;"></div>
<div class="a" style="left:507px;top:175px;width:1px;height:26px;background:#e8eaef;"></div>
<div class="a" style="left:585px;top:175px;width:1px;height:26px;background:#e8eaef;"></div>
<div class="a" style="left:664px;top:175px;width:1px;height:26px;background:#e8eaef;"></div>
<div class="a" style="left:741px;top:175px;width:1px;height:26px;background:#e8eaef;"></div>
<div class="a" style="left:6px;top:201px;width:35px;height:25px;background:#fff;"></div>
<div class="t" style="left:6px;top:202px;width:35px;text-align:center;line-height:25px;color:#444;font-size:10.5px">3</div>
<div class="a" style="left:42px;top:201px;width:76px;height:25px;background:#dcdee5;"></div>
<div class="t" style="left:44px;top:202px;line-height:25px;color:#333;font-size:10.7px">10</div>
<div class="a" style="left:119px;top:201px;width:77px;height:25px;background:#dcdee5;"></div>
<div class="t" style="left:121px;top:202px;line-height:25px;color:#333;font-size:10.7px">成品</div>
<div class="a" style="left:197px;top:201px;width:77px;height:25px;background:#dcdee5;"></div>
<div class="t" style="left:199px;top:202px;line-height:25px;color:#333;font-size:10.7px">台</div>
<div class="a" style="left:275px;top:201px;width:77px;height:25px;background:#dcdee5;"></div>
<div class="t" style="left:275px;top:202px;width:72px;text-align:right;line-height:25px;color:#3a3a3a;font-size:10.5px">10</div>
<div class="a" style="left:353px;top:201px;width:76px;height:25px;background:#dcdee5;"></div>
<div class="t" style="left:353px;top:202px;width:71px;text-align:right;line-height:25px;color:#3a3a3a;font-size:10.5px">100</div>
<div class="a" style="left:430px;top:201px;width:77px;height:25px;background:#dcdee5;"></div>
<div class="t" style="left:430px;top:202px;width:72px;text-align:right;line-height:25px;color:#3a3a3a;font-size:10.5px">1,000.00</div>
<div class="a" style="left:508px;top:201px;width:77px;height:25px;background:#fff;"></div>
<div class="t" style="left:508px;top:202px;width:72px;text-align:right;line-height:25px;color:#3a3a3a;font-size:10.5px">600.00</div>
<div class="a" style="left:586px;top:201px;width:78px;height:25px;background:#dcdee5;"></div>
<div class="t" style="left:586px;top:202px;width:73px;text-align:right;line-height:25px;color:#3a3a3a;font-size:10.5px">400.00</div>
<div class="a" style="left:665px;top:201px;width:76px;height:25px;background:#dcdee5;"></div>
<div class="t" style="left:665px;top:202px;width:71px;text-align:right;line-height:25px;color:#3a3a3a;font-size:10.5px">40</div>
<div class="a" style="left:6px;top:226px;width:736px;height:1px;background:#e8eaef;"></div>
<div class="a" style="left:41px;top:201px;width:1px;height:26px;background:#e8eaef;"></div>
<div class="a" style="left:118px;top:201px;width:1px;height:26px;background:#e8eaef;"></div>
<div class="a" style="left:196px;top:201px;width:1px;height:26px;background:#e8eaef;"></div>
<div class="a" style="left:274px;top:201px;width:1px;height:26px;background:#e8eaef;"></div>
<div class="a" style="left:352px;top:201px;width:1px;height:26px;background:#e8eaef;"></div>
<div class="a" style="left:429px;top:201px;width:1px;height:26px;background:#e8eaef;"></div>
<div class="a" style="left:507px;top:201px;width:1px;height:26px;background:#e8eaef;"></div>
<div class="a" style="left:585px;top:201px;width:1px;height:26px;background:#e8eaef;"></div>
<div class="a" style="left:664px;top:201px;width:1px;height:26px;background:#e8eaef;"></div>
<div class="a" style="left:741px;top:201px;width:1px;height:26px;background:#e8eaef;"></div>
<div class="a" style="left:5px;top:479px;width:778px;height:31px;background:#f2f3f7;"></div>
<div class="a" style="left:5px;top:479px;width:778px;height:1px;background:#e0e5ee;"></div>
<div class="a" style="left:5px;top:509px;width:778px;height:1px;background:#d8dee9;"></div>
<div class="a" style="left:5px;top:479px;width:1px;height:31px;background:#e0e5ee;"></div>
<div class="a" style="left:782px;top:479px;width:1px;height:31px;background:#e0e5ee;"></div>
<div class="a" style="left:41px;top:479px;width:1px;height:31px;background:#e4e7ee;"></div>
<div class="a" style="left:118px;top:479px;width:1px;height:31px;background:#e4e7ee;"></div>
<div class="a" style="left:196px;top:479px;width:1px;height:31px;background:#e4e7ee;"></div>
<div class="a" style="left:274px;top:479px;width:1px;height:31px;background:#e4e7ee;"></div>
<div class="a" style="left:352px;top:479px;width:1px;height:31px;background:#e4e7ee;"></div>
<div class="a" style="left:429px;top:479px;width:1px;height:31px;background:#e4e7ee;"></div>
<div class="a" style="left:507px;top:479px;width:1px;height:31px;background:#e4e7ee;"></div>
<div class="a" style="left:585px;top:479px;width:1px;height:31px;background:#e4e7ee;"></div>
<div class="a" style="left:664px;top:479px;width:1px;height:31px;background:#e4e7ee;"></div>
<div class="a" style="left:741px;top:479px;width:1px;height:31px;background:#e4e7ee;"></div>
<div class="t" style="left:6px;top:479px;width:35px;text-align:center;line-height:31px;font-weight:bold;font-size:10px;color:#111">合计</div>
<div class="t" style="left:275px;top:479px;width:74px;text-align:right;line-height:31px;font-weight:bold;font-size:10.5px;color:#222">30</div>
<div class="t" style="left:430px;top:479px;width:74px;text-align:right;line-height:31px;font-weight:bold;font-size:10.5px;color:#222">2,300.00</div>
<div class="t" style="left:508px;top:479px;width:74px;text-align:right;line-height:31px;font-weight:bold;font-size:10.5px;color:#222">1,500.00</div>
<div class="t" style="left:586px;top:479px;width:75px;text-align:right;line-height:31px;font-weight:bold;font-size:10.5px;color:#222">800.00</div>
<div class="rbox" style="left:504px;top:121.5px;width:83px;height:108.5px"></div>
<div class="rbox" style="left:664.5px;top:123.69999999999999px;width:81.5px;height:106.3px"></div>
<div class="t" style="left:674px;top:519px;width:51px;height:24px;background:#4a56b0;border-radius:3px;color:#fff;text-align:center;line-height:24px;font-size:10px;font-weight:bold">确定</div>
<div class="t" style="left:731px;top:519px;width:51.5px;height:23.5px;background:#efefef;border-radius:3px;color:#555;text-align:center;line-height:24px;font-size:11px">取消</div>
</div>
</body></html>
